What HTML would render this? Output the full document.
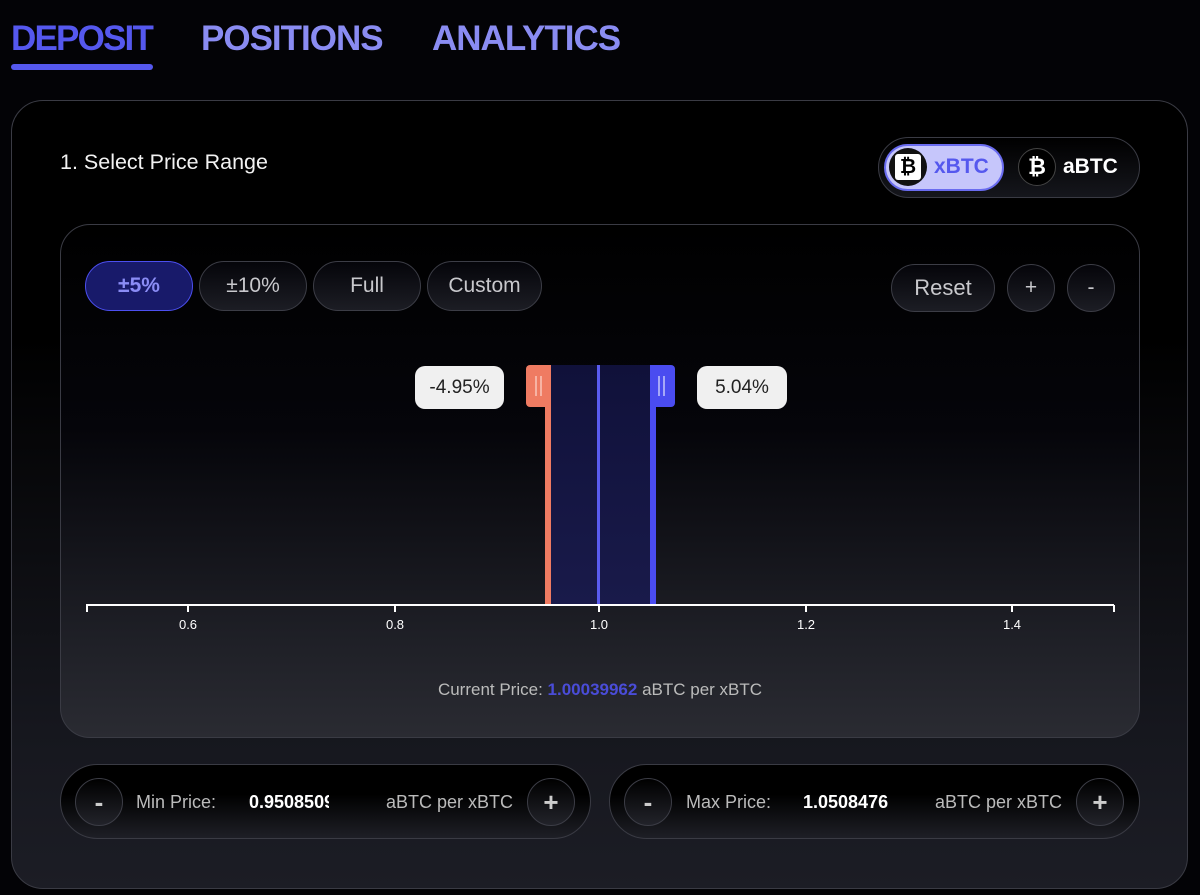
<!DOCTYPE html>
<html><head><meta charset="utf-8"><style>
*{margin:0;padding:0;box-sizing:border-box}
body{width:1200px;height:895px;background:#030306;font-family:"Liberation Sans",sans-serif;position:relative;overflow:hidden;color:#fff}
.abs{position:absolute}
.tab{position:absolute;top:19px;font-size:35px;font-weight:bold;letter-spacing:-1px;color:#8a8cf2}
.card{left:11px;top:100px;width:1177px;height:789px;border:1.5px solid #3a3b44;border-radius:32px;background:linear-gradient(#000 0%,#000 30%,#16171e 80%,#1c1d25 100%)}
.chart{left:60px;top:224px;width:1080px;height:514px;border:1.5px solid #3a3b44;border-radius:30px;background:linear-gradient(#000 0%,#05050a 40%,#1e1f26 80%,#2a2b32 100%)}
.btn{position:absolute;height:50px;border:1.5px solid #3c3d46;border-radius:25px;background:linear-gradient(#05050a,#1c1d24);color:#c8c8cc;font-size:21px;display:flex;align-items:center;justify-content:center}
.lbl{position:absolute;top:366px;height:43px;background:#f0f0f0;border-radius:10px;color:#222;font-size:19px;display:flex;align-items:center;justify-content:center}
.tick{position:absolute;top:605px;width:1.5px;height:7px;background:#fff}
.tl{position:absolute;top:617px;font-size:13px;color:#fff;transform:translateX(-50%)}
.inp{position:absolute;top:764px;height:75px;border:1.5px solid #3a3b44;border-radius:38px;background:linear-gradient(#000 0%,#000 40%,#1e1f26 100%)}
.cb{position:absolute;top:13px;width:48px;height:48px;border-radius:50%;border:1.5px solid #3c3d46;background:linear-gradient(#000,#22232a);color:#ccc;font-size:26px;font-weight:bold;display:flex;align-items:center;justify-content:center}
.t{position:absolute;top:27px;font-size:18px;color:#bbb}
</style></head><body>
<div class="tab" style="left:11px;color:#5558ee;letter-spacing:-1.8px">DEPOSIT</div>
<div class="abs" style="left:11px;top:64px;width:142px;height:6px;border-radius:3px;background:#5558ee"></div>
<div class="tab" style="left:201px">POSITIONS</div>
<div class="tab" style="left:432px">ANALYTICS</div>

<div class="abs card"></div>
<div class="abs" style="left:60px;top:150px;font-size:21.5px;color:#f2f2f2">1. Select Price Range</div>

<div class="abs" style="left:878px;top:137px;width:262px;height:61px;border:1.5px solid #3a3b44;border-radius:31px;background:linear-gradient(#000,#15161c)"></div>
<div class="abs" style="left:884px;top:144px;width:120px;height:47px;border-radius:24px;background:#c6c6fb;border:2px solid #6a6cf0"></div>
<div class="abs" style="left:889px;top:148px;width:38px;height:38px;border-radius:50%;background:#111;"></div>
<div class="abs" style="left:895px;top:154px;width:26px;height:26px;background:#fff;border-radius:3px;color:#000;font-weight:bold;font-size:20px;text-align:center;line-height:26px">₿</div>
<div class="abs" style="left:934px;top:155px;font-size:21px;font-weight:bold;color:#5558ee">xBTC</div>
<div class="abs" style="left:1018px;top:148px;width:38px;height:38px;border-radius:50%;background:#000;border:1.5px solid #444;color:#fff;font-weight:bold;font-size:22px;text-align:center;line-height:35px">₿</div>
<div class="abs" style="left:1063px;top:155px;font-size:21px;font-weight:bold;color:#fff">aBTC</div>

<div class="abs chart"></div>
<div class="btn" style="left:85px;top:261px;width:108px;background:#181a6a;border-color:#4c4ff0;color:#8a8cf5;font-weight:bold">±5%</div>
<div class="btn" style="left:199px;top:261px;width:108px">±10%</div>
<div class="btn" style="left:313px;top:261px;width:108px">Full</div>
<div class="btn" style="left:427px;top:261px;width:115px">Custom</div>
<div class="btn" style="left:891px;top:264px;width:104px;height:48px;font-size:22px">Reset</div>
<div class="btn" style="left:1007px;top:264px;width:48px;height:48px">+</div>
<div class="btn" style="left:1067px;top:264px;width:48px;height:48px">-</div>

<div class="lbl" style="left:415px;width:89px">-4.95%</div>
<div class="lbl" style="left:697px;width:90px">5.04%</div>
<div class="abs" style="left:551px;top:365px;width:99px;height:240px;background:linear-gradient(#10113a,#191a4a)"></div>
<div class="abs" style="left:545px;top:365px;width:6px;height:240px;background:#ef7b62"></div>
<div class="abs" style="left:526px;top:365px;width:25px;height:42px;background:#ef7b62;border-radius:4px 0 0 4px"></div>
<div class="abs" style="left:535px;top:376px;width:2px;height:20px;background:#f7b3a4"></div>
<div class="abs" style="left:540px;top:376px;width:2px;height:20px;background:#f7b3a4"></div>
<div class="abs" style="left:650px;top:365px;width:6px;height:240px;background:#4a4cf0"></div>
<div class="abs" style="left:650px;top:365px;width:25px;height:42px;background:#4a4cf0;border-radius:0 4px 4px 0"></div>
<div class="abs" style="left:658px;top:376px;width:2px;height:20px;background:#a6a8f8"></div>
<div class="abs" style="left:663px;top:376px;width:2px;height:20px;background:#a6a8f8"></div>
<div class="abs" style="left:597px;top:365px;width:3px;height:240px;background:#5a5cf0"></div>

<div class="abs" style="left:86px;top:604px;width:1028px;height:1.5px;background:#fff"></div>
<div class="tick" style="left:86px"></div><div class="tick" style="left:1113px"></div>
<div class="tick" style="left:187px"></div><div class="tl" style="left:188px">0.6</div>
<div class="tick" style="left:394px"></div><div class="tl" style="left:395px">0.8</div>
<div class="tick" style="left:598px"></div><div class="tl" style="left:599px">1.0</div>
<div class="tick" style="left:805px"></div><div class="tl" style="left:806px">1.2</div>
<div class="tick" style="left:1011px"></div><div class="tl" style="left:1012px">1.4</div>

<div class="abs" style="left:0;width:1200px;top:680px;text-align:center;font-size:17px;color:#bbb">Current Price: <span style="color:#4a4cd8;font-weight:bold">1.00039962</span> aBTC per xBTC</div>

<div class="inp" style="left:60px;width:531px">
<div class="cb" style="left:14px">-</div>
<div class="t" style="left:75px">Min Price:</div>
<div class="t" style="left:188px;color:#fff;font-weight:bold;width:80px;overflow:hidden;white-space:nowrap">0.95085099</div>
<div class="t" style="left:325px">aBTC per xBTC</div>
<div class="cb" style="left:466px">+</div>
</div>
<div class="inp" style="left:609px;width:531px">
<div class="cb" style="left:14px">-</div>
<div class="t" style="left:76px">Max Price:</div>
<div class="t" style="left:193px;color:#fff;font-weight:bold">1.0508476</div>
<div class="t" style="left:325px">aBTC per xBTC</div>
<div class="cb" style="left:466px">+</div>
</div>
</body></html>
